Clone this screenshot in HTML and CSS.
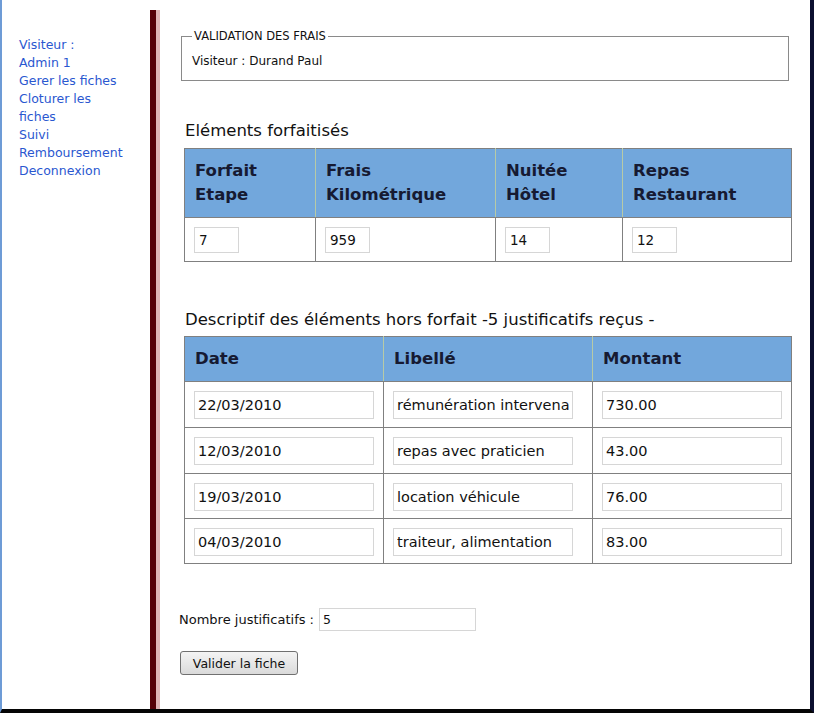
FILE: index.html
```html
<!DOCTYPE html>
<html lang="fr">
<head>
<meta charset="utf-8">
<title>Validation des frais</title>
<link rel="stylesheet" href="styles.css">
</head>
<body>
<div class="page">
  <nav class="sidebar">
    <ul class="menu">
      <li><a href="#">Visiteur :</a></li>
      <li><a href="#">Admin 1</a></li>
      <li><a href="#">Gerer les fiches</a></li>
      <li><a href="#">Cloturer les fiches</a></li>
      <li><a href="#">Suivi Remboursement</a></li>
      <li><a href="#">Deconnexion</a></li>
    </ul>
  </nav>
  <main class="main">
    <div class="inner">
      <fieldset class="box">
        <legend>VALIDATION DES FRAIS</legend>
        <p class="visiteur">Visiteur : Durand Paul</p>
      </fieldset>

      <h3 class="title title-1">Eléments forfaitisés</h3>
      <table class="grid forfait">
        <thead>
          <tr>
            <th class="c-etape">Forfait Etape</th>
            <th class="c-km">Frais Kilométrique</th>
            <th class="c-nuit">Nuitée Hôtel</th>
            <th class="c-repas">Repas Restaurant</th>
          </tr>
        </thead>
        <tbody>
          <tr>
            <td><input class="small" type="text" value="7"></td>
            <td><input class="small" type="text" value="959"></td>
            <td><input class="small" type="text" value="14"></td>
            <td><input class="small" type="text" value="12"></td>
          </tr>
        </tbody>
      </table>

      <h3 class="title title-2">Descriptif des éléments hors forfait -5 justificatifs reçus -</h3>
      <table class="grid horsforfait">
        <thead>
          <tr>
            <th class="c-date">Date</th>
            <th class="c-lib">Libellé</th>
            <th class="c-mont">Montant</th>
          </tr>
        </thead>
        <tbody>
          <tr>
            <td><input class="wide" type="text" value="22/03/2010"></td>
            <td><input class="wide" type="text" value="rémunération intervenant"></td>
            <td><input class="wide" type="text" value="730.00"></td>
          </tr>
          <tr>
            <td><input class="wide" type="text" value="12/03/2010"></td>
            <td><input class="wide" type="text" value="repas avec praticien"></td>
            <td><input class="wide" type="text" value="43.00"></td>
          </tr>
          <tr>
            <td><input class="wide" type="text" value="19/03/2010"></td>
            <td><input class="wide" type="text" value="location véhicule"></td>
            <td><input class="wide" type="text" value="76.00"></td>
          </tr>
          <tr>
            <td><input class="wide" type="text" value="04/03/2010"></td>
            <td><input class="wide" type="text" value="traiteur, alimentation"></td>
            <td><input class="wide" type="text" value="83.00"></td>
          </tr>
        </tbody>
      </table>

      <form class="validate" action="#">
        <div class="field">
          <label class="lbl" for="nb">Nombre justificatifs :</label>
          <input class="nb" id="nb" type="text" value="5">
        </div>
        <button class="btn" type="button">Valider la fiche</button>
      </form>
    </div>
  </main>
</div>
</body>
</html>
```
FILE: styles.css
```css
html, body {
  margin: 0;
  padding: 0;
  background: #ffffff;
}

body {
  font-family: "DejaVu Sans", sans-serif;
  color: #111111;
}

.page {
  display: flex;
  height: 713px;
  box-sizing: border-box;
  border-left: 2px solid #6d9bd6;
  border-right: 4px solid #0c1030;
  border-bottom: 4px solid #050505;
  background: #ffffff;
}

/* ---------- sidebar ---------- */
.sidebar {
  flex: none;
  width: 148px;
  box-sizing: border-box;
  padding: 36px 0 0 17px;
}

.menu {
  list-style: none;
  margin: 0;
  padding: 0;
  width: 108px;
}

.menu li {
  font-size: 12.5px;
  line-height: 18px;
}

.menu a {
  color: #2a57d0;
  text-decoration: none;
}

/* ---------- main ---------- */
.main {
  flex: 1;
  margin-top: 10px;
  border-left: 6px solid #560008;
}

.inner {
  height: 100%;
  box-sizing: border-box;
  border-left: 4px solid #dfb3b5;
  padding: 19px 19px 0 20px;
}

.box {
  margin: 0 3px 0 1px;
  padding: 0 10px 11px 10px;
  border: 1px solid #8a8a8a;
}

.box legend {
  padding: 0 2px;
  font-size: 11.5px;
  line-height: 14px;
  color: #111111;
}

.visiteur {
  margin: 10px 0 0 0;
  font-size: 12px;
  line-height: 16px;
}

.title {
  margin: 0 0 0 5px;
  font-size: 16.5px;
  font-weight: normal;
  line-height: 20px;
  color: #111111;
}

.title-1 {
  margin-top: 40px;
  margin-bottom: 7px;
}

.title-2 {
  margin-top: 48px;
  margin-bottom: 6px;
}

/* ---------- tables ---------- */
.grid {
  margin-left: 4px;
  width: 608px;
  border-collapse: collapse;
  border: 1px solid #808080;
}

.grid th {
  background: #72a7dc;
  color: #161a32;
  text-align: left;
  vertical-align: top;
  font-size: 16.5px;
  font-weight: bold;
  line-height: 24px;
  padding: 10px 10px 10px 10px;
  border-left: 1px solid #b7caa6;
  border-bottom: 1px solid #808080;
}

.grid th:first-child {
  border-left: 1px solid #808080;
}

.grid td {
  border: 1px solid #808080;
  padding: 9px 9px 8px 9px;
  vertical-align: top;
}

.horsforfait tbody tr:nth-child(n+3) td {
  padding-bottom: 7px;
}

.c-etape { width: 110px; }
.c-km { width: 159px; }
.c-nuit { width: 106px; }
.c-repas { width: 148px; }

.c-date { width: 178px; }
.c-lib { width: 188px; }
.c-mont { width: 178px; }

.grid td input {
  display: block;
  box-sizing: border-box;
  margin: 0;
  border: 1px solid #d6d6d6;
  font-family: "DejaVu Sans", sans-serif;
  color: #111111;
  background: #ffffff;
}

.small {
  width: 45px;
  height: 26px;
  padding: 0 4px;
  font-size: 13.5px;
}

.wide {
  width: 180px;
  height: 28px;
  padding: 0 3px;
  font-size: 14.5px;
}

/* ---------- bottom form ---------- */
.validate {
  margin-top: 44px;
}

.field {
  display: flex;
  align-items: center;
  gap: 5px;
  margin-left: -1px;
}

.lbl {
  font-size: 13px;
  color: #111111;
}

.nb {
  box-sizing: border-box;
  width: 157px;
  height: 23px;
  margin: 0;
  padding: 0 3px;
  border: 1px solid #d6d6d6;
  font-family: "DejaVu Sans", sans-serif;
  font-size: 12.5px;
  color: #111111;
}

.btn {
  display: block;
  margin-top: 20px;
  box-sizing: border-box;
  width: 118px;
  height: 24px;
  padding: 0;
  border: 1px solid #707070;
  border-radius: 3px;
  background: linear-gradient(#f4f4f4, #dadada);
  font-family: "DejaVu Sans", sans-serif;
  font-size: 12.5px;
  color: #111111;
}
```
